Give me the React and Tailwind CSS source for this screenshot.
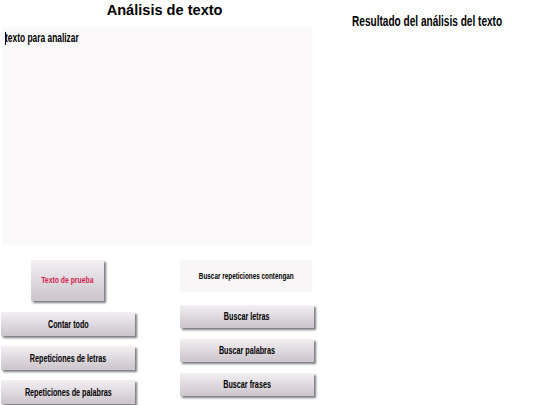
import React from "react";

const font = { fontFamily: '"Liberation Sans", Arial, sans-serif' };

function Narrow({ children, className = "" }) {
  return <span className={"inline-block whitespace-nowrap " + className}>{children}</span>;
}

function GrayButton({ children, className = "" }) {
  return (
    <button
      className={
        "flex items-center justify-center font-bold bg-gradient-to-b from-[#f3eff2] to-[#cbc5cc] shadow-[2px_2px_2px_rgba(90,90,100,0.8)] " +
        className
      }
      style={font}
    >
      <Narrow className="scale-x-[0.72]">{children}</Narrow>
    </button>
  );
}

export default function App() {
  return (
    <div className="flex w-[540px] h-[405px] bg-white overflow-hidden" style={font}>
      <div className="w-[316px] flex flex-col">
        <h1 className="h-[27px] pl-[16px] pt-[1px] text-center text-[15.5px] font-bold leading-[18px] text-black">
          <Narrow className="scale-x-[0.94]">Análisis de texto</Narrow>
        </h1>
        <div className="ml-[2px] w-[310px] h-[218px] bg-[#faf8f9] pl-[3px] pt-[3px] text-[12px] font-bold text-black leading-[16px]">
          <span className="inline-block w-px h-[13px] bg-black align-middle -mr-px" />
          <Narrow className="scale-x-[0.7] origin-left">texto para analizar</Narrow>
        </div>
        <div className="flex">
          <div className="w-[180px] flex flex-col">
            <GrayButton className="mt-[15px] ml-[31px] w-[73px] h-[41px] text-[9.5px] text-[#d31f4c]">
              Texto de prueba
            </GrayButton>
            <GrayButton className="mt-[11px] ml-[1px] w-[134px] h-[24px] text-[10px] text-black">
              Contar todo
            </GrayButton>
            <GrayButton className="mt-[10px] ml-[1px] w-[134px] h-[24px] text-[10px] text-black">
              Repeticiones de letras
            </GrayButton>
            <GrayButton className="mt-[10px] ml-[1px] w-[134px] h-[24px] text-[10px] text-black">
              Repeticiones de palabras
            </GrayButton>
          </div>
          <div className="flex flex-col">
            <div className="mt-[15px] w-[132px] h-[32px] bg-[#f8f6f7] flex items-center justify-center text-[8.5px] font-bold text-black">
              <Narrow className="scale-x-[0.75]">Buscar repeticiones contengan</Narrow>
            </div>
            <GrayButton className="mt-[13px] w-[134px] h-[23px] text-[10px] text-black">Buscar letras</GrayButton>
            <GrayButton className="mt-[11px] w-[134px] h-[23px] text-[10px] text-black">Buscar palabras</GrayButton>
            <GrayButton className="mt-[11px] w-[134px] h-[23px] text-[10px] text-black">Buscar frases</GrayButton>
          </div>
        </div>
      </div>
      <div className="flex-1 pl-[38px] pt-[13px]">
        <h2 className="text-[14px] font-bold text-black leading-[16px]">
          <Narrow className="scale-x-[0.72] origin-left">Resultado del análisis del texto</Narrow>
        </h2>
      </div>
    </div>
  );
}
